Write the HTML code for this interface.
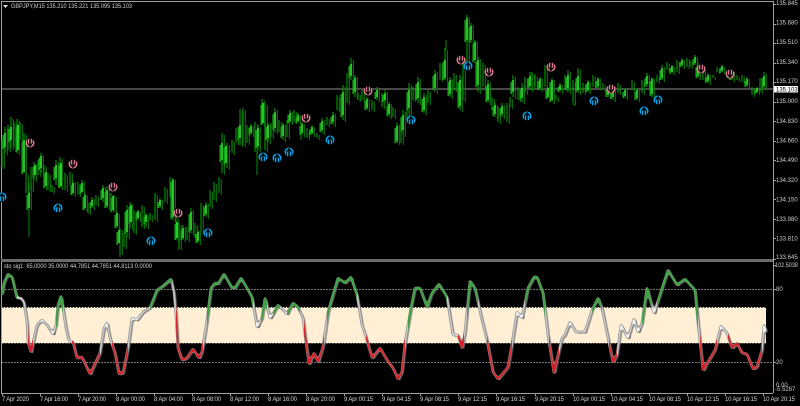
<!DOCTYPE html>
<html><head><meta charset="utf-8"><style>
html,body{margin:0;padding:0;background:#000;width:800px;height:406px;overflow:hidden}
svg{display:block;filter:blur(.3px)}
text{font-family:"Liberation Sans",sans-serif;fill:#cfcfcf;font-size:6px}
</style></head><body>
<svg width="800" height="406" viewBox="0 0 800 406" xmlns="http://www.w3.org/2000/svg">
<defs>
<filter id="sm" x="-2%" y="-5%" width="104%" height="110%"><feGaussianBlur stdDeviation="1"/><feComponentTransfer><feFuncA type="linear" slope="5" intercept="-1.8"/></feComponentTransfer></filter>
<g id="u"><circle r="4.5" fill="#08a5ea"/><path d="M0 -3.2V5.2" stroke="#000" stroke-width="1.5" fill="none"/><path d="M-2.7 -.2L0 -3.2L2.7 -.2" stroke="#000" stroke-width="1.2" fill="none"/><path d="M-2.4 -.4V5M2.4 -.4V5" stroke="#000" stroke-width=".7" fill="none"/></g>
<g id="d"><circle r="4.5" fill="#db7b90"/><path d="M0 -5.2V3.2" stroke="#000" stroke-width="1.5" fill="none"/><path d="M-2.7 .2L0 3.2L2.7 .2" stroke="#000" stroke-width="1.2" fill="none"/><path d="M-2.4 .4V-5M2.4 .4V-5" stroke="#000" stroke-width=".7" fill="none"/></g>
<path id="w" d="M2 140V167M5 127V153M8 125V150M11 117V148M14 122V147M17 119V153M20 122V140M24 133V173M26 173V193M29 183V208M31 167V190M34 162V180M38 160V175M41 153V173M44 165V188M48 173V190M52 185V192M56 160V185M60 157V188M65 173V190M70 172V185M73 180V195M78 182V195M82 180V193M85 193V210M88 203V213M92 197V208M96 195V205M103 185V202M107 187V208M111 193V210M114 195V212M117 212V228M120 228V253M124 233V247M127 205V237M130 202V228M134 210V233M138 210V220M142 205V227M146 213V227M150 213V220M155 193V220M160 198V208M165 187V202M170 177V197M173 178V220M176 217V240M179 223V248M183 225V240M187 227V240M191 208V233M195 223V238M198 230V243M201 203V232M206 202V217M210 190V207M214 182V200M219 177V193M222 133V173M227 143V168M232 140V153M236 128V143M240 109V145M243 108V145M247 125V143M251 124V135M255 122V152M258 125V150M262 99V125M265 103V150M268 123V142M271 123V137M275 108V132M279 120V132M283 123V140M287 120V137M290 110V123M294 110V122M298 113V123M302 122V135M307 128V138M312 125V135M317 133V138M322 118V133M327 117V125M333 112V125M337 95V110M343 85V120M347 73V103M351 58V80M355 75V97M358 93V100M362 90V100M367 97V110M372 100V110M377 87V100M382 93V107M385 90V103M389 102V117M393 107V117M397 123V143M401 120V143M403 110V135M407 110V120M409 83V113M413 87V100M418 77V103M424 93V113M428 90V103M435 70V92M440 63V80M445 48V80M450 77V97M454 73V90M460 75V110M463 57V100M467 15V62M471 23V43M475 40V63M478 57V92M483 63V87M488 80V103M492 97V110M495 103V117M498 107V122M502 103V117M507 103V122M510 97V107M513 75V97M518 87V100M522 83V102M525 77V93M530 72V90M532 72V87M535 75V87M540 77V90M545 65V87M548 87V98M552 78V102M556 95V100M560 83V92M565 75V90M568 70V92M573 80V103M578 68V93M583 83V93M588 80V92M593 75V87M598 77V88M603 83V90M608 87V97M613 85V100M618 83V93M625 88V98M632 80V90M637 88V100M642 80V93M647 73V87M652 77V97M657 75V82M662 65V80M667 62V70M672 65V73M677 60V72M682 58V67M687 58V67M690 60V67M695 55V65M698 63V78M703 68V80M708 73V83M713 75V78M717 67V72M722 65V72M727 70V78M732 70V80M737 75V80M742 75V82M747 77V87M752 87V95M757 87V93M760 78V92M764 72V88"/>
<path id="b" d="M5 133V147M11 127V140M18 125V150M24 140V172M29 193V208M35 165V175M41 156V168M46 172V186M56 165V178M61 163V186M73 183V193M82 183V192M85 195V208M92 200V206M103 188V198M107 190V206M113 196V210M117 213V226M119 230V243M127 210V232M131 205V222M138 211V218M146 215V222M160 200V206M173 180V217M177 222V238M183 228V238M191 212V230M198 232V241M206 205V214M222 143V160M226 146V163M240 125V138M251 126V133M258 128V146M263 103V123M268 125V138M275 112V128M283 125V136M290 113V121M298 115V121M302 124V133M312 127V133M322 121V130M333 115V122M343 92V115M351 64V76M355 78V92M367 99V108M377 90V97M385 93V100M389 104V114M397 126V141M403 115V130M409 90V108M418 82V98M424 97V110M435 74V88M445 60V78M450 80V94M460 80V106M467 18V40M471 26V40M475 42V60M478 60V85M488 84V100M495 105V114M502 106V114M513 80V92M522 88V98M530 76V86M540 79V88M548 88V97M552 80V100M560 85V90M568 75V88M578 76V90M588 82V90M598 79V86M608 88V95M613 88V97M625 90V96M637 90V98M647 76V84M652 79V94M662 68V78M672 66V72M682 60V65M695 57V63M698 65V76M708 75V81M722 66V71M732 72V78M747 79V85M757 88V92M764 76V86"/>
<clipPath id="cg"><rect x="0" y="260" width="17" height="130"/><rect x="56" y="260" width="7" height="130"/><rect x="150" y="260" width="22" height="130"/><rect x="207" y="260" width="46" height="130"/><rect x="261" y="260" width="6" height="130"/><rect x="273" y="260" width="7" height="130"/><rect x="287" y="260" width="13" height="130"/><rect x="327" y="260" width="30" height="130"/><rect x="408" y="260" width="39" height="130"/><rect x="467" y="260" width="11" height="130"/><rect x="525" y="260" width="20" height="130"/><rect x="592" y="260" width="10" height="130"/><rect x="642" y="260" width="10" height="130"/><rect x="657" y="260" width="41" height="130"/></clipPath>
<clipPath id="cr"><rect x="28" y="260" width="5" height="130"/><rect x="72" y="260" width="28" height="130"/><rect x="112" y="260" width="16" height="130"/><rect x="176" y="260" width="27" height="130"/><rect x="304" y="260" width="20" height="130"/><rect x="366" y="260" width="39" height="130"/><rect x="458" y="260" width="6" height="130"/><rect x="487" y="260" width="25" height="130"/><rect x="549" y="260" width="10" height="130"/><rect x="609" y="260" width="8" height="130"/><rect x="700" y="260" width="17" height="130"/><rect x="728" y="260" width="34" height="130"/></clipPath>
<polyline id="st" fill="none" points="2,295 4,283 8,274 12,277 14,285 17,298 21,298 24,302 27,322 28,342 31,352 33,343 37,325 42,320 47,325 53,334 56,325 58,305 61,296 63,308 66,328 69,341 73,342 77,358 82,357 90,374 100,353 104,328 107,323 110,338 115,353 119,374 123,373 128,348 132,318 137,320 143,312 150,308 157,290 163,286 171,279 174,292 176,315 178,348 182,360 187,358 193,349 199,358 202,352 207,320 211,288 215,283 218,284 224,274 232,288 235,288 241,278 247,288 252,297 257,327 262,318 265,298 270,318 273,314 278,305 287,314 293,303 298,307 303,318 305,335 309,364 314,353 318,362 323,347 328,312 338,278 345,283 351,277 357,295 362,325 366,337 372,358 380,348 387,360 393,368 398,379 402,372 405,343 411,308 415,288 420,288 427,307 432,293 439,284 447,297 453,335 458,335 462,348 465,332 470,281 475,288 482,320 487,340 493,372 498,379 508,367 513,338 517,312 522,318 528,288 534,277 537,277 543,293 548,335 554,373 558,355 562,338 565,335 570,322 576,332 585,332 592,310 598,298 602,308 609,343 613,362 617,355 621,325 628,338 634,319 638,332 642,323 647,288 654,313 668,270 677,285 685,279 695,290 698,322 703,370 715,350 721,326 727,333 732,348 737,343 742,353 747,354 753,369 757,367 762,350 764,325 766,332"/>
</defs>
<rect width="800" height="406" fill="#000"/>
<path d="M1 1.5H773M1.5 1V393M1 393.5H773M773.5 1V393" stroke="#a0a0a0" stroke-width="1" fill="none"/>
<rect x="2" y="88" width="771" height="2" fill="#484848"/>

<g fill="none">
<use href="#w" stroke="#078a07" stroke-width="1.2"/>
<use href="#w" stroke="#06780a" stroke-width="1.1" transform="translate(2.3,2)"/>
<use href="#b" stroke="#16a816" stroke-width="1.5" transform="translate(-1.8,2)"/>
<use href="#b" stroke="#2fd92f" stroke-width="1.7"/>
<path stroke="#078a07" stroke-width="1" d="M29 208V237M120 253V257M179 248V250M257 150V175M301 135V140M446 40V50M574 103V106"/>
</g>

<use href="#u" x="2" y="197"/><use href="#u" x="58" y="208"/><use href="#u" x="151" y="241"/><use href="#u" x="208" y="233"/><use href="#u" x="263" y="157"/><use href="#u" x="277" y="158"/><use href="#u" x="289" y="152"/><use href="#u" x="330" y="140"/><use href="#u" x="411" y="120"/><use href="#u" x="468" y="66"/><use href="#u" x="527" y="116"/><use href="#u" x="594" y="101"/><use href="#u" x="644" y="111"/><use href="#u" x="658" y="100"/>
<use href="#d" x="30" y="143"/><use href="#d" x="73" y="164"/><use href="#d" x="113" y="187"/><use href="#d" x="178" y="213"/><use href="#d" x="306" y="118"/><use href="#d" x="368" y="91"/><use href="#d" x="461" y="60"/><use href="#d" x="489" y="72"/><use href="#d" x="551" y="67"/><use href="#d" x="611" y="89"/><use href="#d" x="701" y="69"/><use href="#d" x="730" y="74"/>

<path d="M3 5H8L5.5 8Z" fill="#ddd"/>
<text x="11" y="8.2" textLength="121" lengthAdjust="spacingAndGlyphs">GBPJPY,M15  135.210 135.221 135.095 135.103</text>

<rect x="1" y="259" width="772" height="3" fill="#6a6a6a"/>
<rect x="2" y="307" width="764" height="36" fill="#ffefd5"/>
<path d="M2 289.5H773M2 362.5H773" stroke="#777" stroke-width="1" stroke-dasharray="2 1" fill="none"/>
<path d="M2 307.5H766M2 343.5H766" stroke="#555" stroke-width="1" stroke-dasharray="2 1" fill="none"/>
<text x="4" y="268" textLength="148" lengthAdjust="spacingAndGlyphs">sto sig1:  65.0000 35.0000 44.7851 44.7851 44.8113 0.0000</text>

<g filter="url(#sm)"><use href="#st" stroke="#666" stroke-width="1.5" transform="translate(1.5,1)"/></g>
<g filter="url(#sm)"><use href="#st" stroke="#8a8a8a" stroke-width="2.5" stroke-linejoin="round"/></g>
<g filter="url(#sm)"><use href="#st" stroke="#f2f2f2" stroke-width="1.5" stroke-linejoin="round"/></g>
<g clip-path="url(#cg)"><g filter="url(#sm)"><use href="#st" stroke="#43a047" stroke-width="2.1" stroke-linejoin="round"/></g></g>
<g clip-path="url(#cr)"><g filter="url(#sm)"><use href="#st" stroke="#d81f26" stroke-width="1.8" stroke-linejoin="round"/></g></g>

<path stroke="#a0a0a0" stroke-width="1" d="M773 4.5h3M773 24.5h3M773 43.5h3M773 63.5h3M773 82.5h3M773 102.5h3M773 121.5h3M773 141.5h3M773 160.5h3M773 180.5h3M773 199.5h3M773 219.5h3M773 238.5h3M773 259.5h3M773 265.5h3M773 289.5h3M773 362.5h3"/>
<g>
<text x="776" y="5">135.845</text><text x="776" y="24.5">135.680</text><text x="776" y="44">135.510</text><text x="776" y="64">135.340</text><text x="776" y="83">135.170</text><text x="776" y="103">135.000</text><text x="776" y="123">134.830</text><text x="776" y="142.5">134.660</text><text x="776" y="162">134.490</text><text x="776" y="182">134.320</text><text x="776" y="201.5">134.150</text><text x="776" y="221">133.980</text><text x="776" y="240.5">133.810</text><text x="776" y="259">133.645</text>
<text x="775" y="267" textLength="23" lengthAdjust="spacingAndGlyphs">102.5038</text><text x="776" y="291">80</text><text x="776" y="364">20</text><text x="776" y="387">0.00</text><text x="775" y="391">-5.5287</text>
</g>
<rect x="774" y="86" width="24" height="6.5" fill="#fff"/>
<text x="776" y="91.5" style="fill:#000">135.103</text>

<path stroke="#a0a0a0" stroke-width="1" d="M2.5 393v3M40.5 393v3M78.5 393v3M116.5 393v3M154.5 393v3M192.5 393v3M230.5 393v3M268.5 393v3M306.5 393v3M344.5 393v3M382.5 393v3M420.5 393v3M458.5 393v3M496.5 393v3M535.5 393v3M573.5 393v3M611.5 393v3M649.5 393v3M687.5 393v3M725.5 393v3M763.5 393v3"/>
<g>
<text x="2" y="401" textLength="27">7 Apr 2020</text><text x="40" y="401" textLength="28">7 Apr 16:00</text><text x="78" y="401" textLength="28">7 Apr 20:00</text><text x="116" y="401" textLength="29">8 Apr 00:00</text><text x="154" y="401" textLength="29">8 Apr 04:00</text><text x="192" y="401" textLength="29">8 Apr 08:00</text><text x="230" y="401" textLength="29">8 Apr 12:00</text><text x="268" y="401" textLength="29">8 Apr 16:00</text><text x="306" y="401" textLength="29">8 Apr 20:00</text><text x="344" y="401" textLength="29">9 Apr 00:15</text><text x="382" y="401" textLength="29">9 Apr 04:15</text><text x="420" y="401" textLength="29">9 Apr 08:15</text><text x="458" y="401" textLength="29">9 Apr 12:15</text><text x="496" y="401" textLength="29">9 Apr 16:15</text><text x="535" y="401" textLength="29">9 Apr 20:15</text><text x="573" y="401" textLength="32">10 Apr 00:15</text><text x="611" y="401" textLength="32">10 Apr 04:15</text><text x="649" y="401" textLength="32">10 Apr 08:15</text><text x="687" y="401" textLength="32">10 Apr 12:15</text><text x="725" y="401" textLength="32">10 Apr 16:15</text><text x="763" y="401" textLength="32">10 Apr 20:15</text>
</g>
</svg>
</body></html>
